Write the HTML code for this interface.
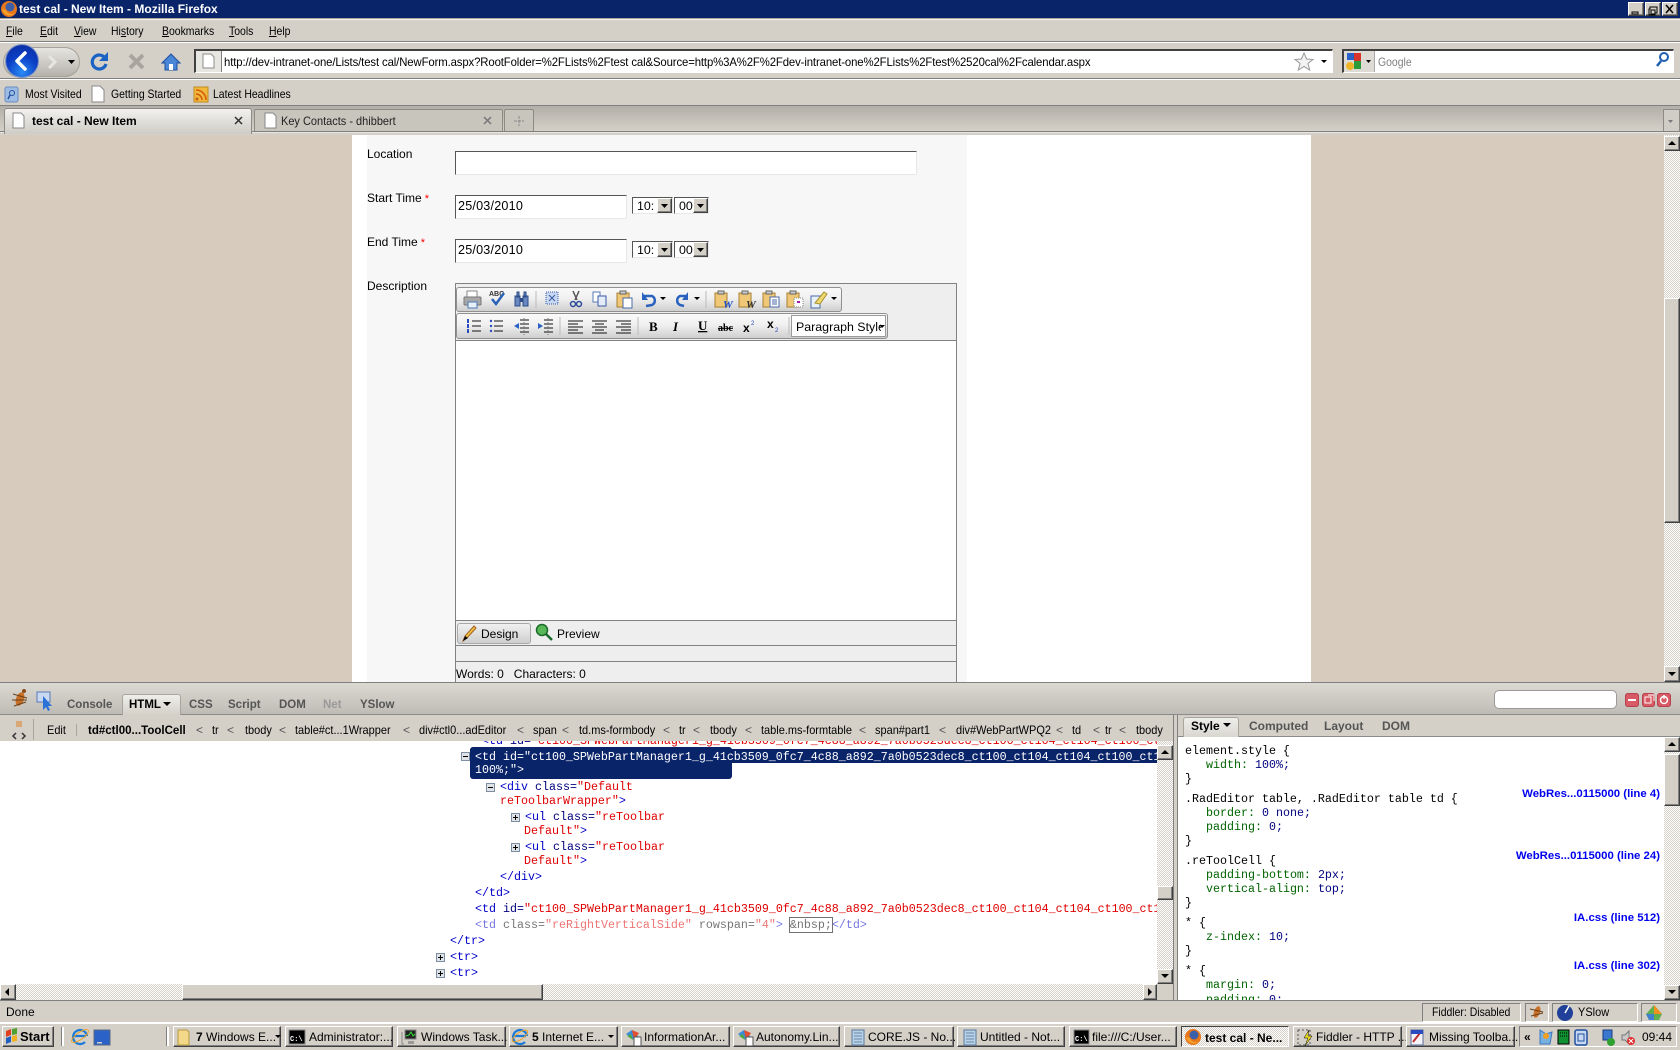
<!DOCTYPE html>
<html><head><meta charset="utf-8"><title>test cal - New Item - Mozilla Firefox</title>
<style>
html,body{margin:0;padding:0;width:1680px;height:1050px;overflow:hidden;background:#d4d0c8}
body{position:relative;font-family:"Liberation Sans",sans-serif;font-size:12px;color:#000}
.a{position:absolute}
.t{position:absolute;white-space:pre;line-height:14px;height:14px}
.u{transform:scaleX(.87);transform-origin:0 50%}
.c{transform:scaleX(.915);transform-origin:0 50%}
.m{position:absolute;white-space:pre;line-height:14px;height:14px;font-family:"Liberation Mono",monospace;font-size:11.67px;color:#000}
.b{color:#0000c8}.n{color:#00007f}.r{color:#e00000}.g{color:#006400}
.raised{position:absolute;box-sizing:border-box;background:#d4d0c8;border:1px solid;border-color:#fff #404040 #404040 #fff;box-shadow:inset -1px -1px #808080}
.chk{position:absolute;background:repeating-conic-gradient(#d4d0c8 0 25%,#fff 0 50%) 0 0/2px 2px}
.in{position:absolute;box-sizing:border-box;background:#fff;border:1px solid;border-top-color:#555;border-left-color:#555;border-right-color:#e8e8e8;border-bottom-color:#e8e8e8}
.tb{position:absolute;top:1026px;height:21px;box-sizing:border-box;background:#d4d0c8;border:1px solid;border-color:#fff #404040 #404040 #fff;box-shadow:inset -1px -1px #808080}
.cell{position:absolute;top:1003px;height:19px;box-sizing:border-box;border:1px solid;border-color:#808080 #fff #fff #808080}
.lk{position:absolute;white-space:pre;line-height:14px;height:14px;font-weight:bold;color:#0000f0;font-size:11.4px;text-align:right;right:20px}
.tree{position:absolute;width:9px;height:9px;box-sizing:border-box;border:1px solid #7d8ea3;background:#dfe3e8}
</style></head><body>

<!-- title bar -->
<div class="a" style="left:0;top:0;width:1680px;height:18px;background:#0a246a"></div>
<div class="t" style="left:19px;top:2px;color:#fff;font-weight:bold;font-size:12px">test cal - New Item - Mozilla Firefox</div>
<div class="raised" style="left:1628px;top:2px;width:16px;height:14px"></div>
<div class="raised" style="left:1645px;top:2px;width:16px;height:14px"></div>
<div class="raised" style="left:1662px;top:2px;width:16px;height:14px"></div>
<div class="a" style="left:0;top:18px;width:1680px;height:1px;background:#a8a59e"></div>
<div class="a" style="left:0;top:19px;width:1680px;height:1px;background:#f4f3f0"></div>

<!-- menu -->
<div class="t u" style="left:6px;top:24px"><u>F</u>ile</div>
<div class="t u" style="left:40px;top:24px"><u>E</u>dit</div>
<div class="t u" style="left:74px;top:24px"><u>V</u>iew</div>
<div class="t u" style="left:111px;top:24px">Hi<u>s</u>tory</div>
<div class="t u" style="left:162px;top:24px"><u>B</u>ookmarks</div>
<div class="t u" style="left:229px;top:24px"><u>T</u>ools</div>
<div class="t u" style="left:269px;top:24px"><u>H</u>elp</div>
<div class="a" style="left:0;top:41px;width:1680px;height:1px;background:#808080"></div>
<div class="a" style="left:0;top:42px;width:1680px;height:1px;background:#fff"></div>

<!-- nav bar -->
<div class="a" style="left:3px;top:47px;width:77px;height:30px;border-radius:15px;background:linear-gradient(#e8e6e1,#b4b1aa);box-shadow:inset 0 0 0 1px #a5a29b"></div>
<div class="a" style="left:6px;top:45px;width:32px;height:32px;border-radius:50%;background:radial-gradient(circle at 50% 85%,#2b8cf5 0,#0b3fc6 50%,#0c2a9c 100%);box-shadow:0 0 0 1px #7d93c8"></div>
<div class="in" style="left:194px;top:49px;width:1139px;height:24px;border-color:#404040 #fff #fff #404040;border-width:2px 1px 1px 2px"></div>
<div class="a" style="left:196px;top:51px;width:25px;height:21px;background:#e8e6e1;border-right:1px solid #808080"></div>
<div class="t" id="url" style="left:224px;top:55px;font-size:12px;letter-spacing:-.12px;transform:scaleX(.945);transform-origin:0 50%">http://dev-intranet-one/Lists/test cal/NewForm.aspx?RootFolder=%2FLists%2Ftest cal&amp;Source=http%3A%2F%2Fdev-intranet-one%2FLists%2Ftest%2520cal%2Fcalendar.aspx</div>
<div class="in" style="left:1342px;top:49px;width:332px;height:24px;border-color:#404040 #fff #fff #404040;border-width:2px 1px 1px 2px"></div>
<div class="a" style="left:1344px;top:51px;width:30px;height:21px;background:#dedbd5;border-right:1px solid #aaa"></div>
<div class="t u" style="left:1378px;top:55px;color:#808080">Google</div>
<div class="a" style="left:0;top:78px;width:1680px;height:1px;background:#808080"></div>
<div class="a" style="left:0;top:79px;width:1680px;height:1px;background:#fff"></div>

<!-- bookmarks -->
<div class="t u" style="left:25px;top:87px">Most Visited</div>
<div class="t u" style="left:111px;top:87px">Getting Started</div>
<div class="t u" style="left:213px;top:87px">Latest Headlines</div>
<div class="a" style="left:0;top:105px;width:1680px;height:1px;background:#808080"></div>

<!-- tab strip -->
<div class="a" style="left:0;top:106px;width:1680px;height:25px;background:linear-gradient(#b2afa8,#d4d0c8)"></div>
<div class="a" style="left:0;top:131px;width:1680px;height:1px;background:#808080"></div>
<div class="a" style="left:0;top:132px;width:1680px;height:1px;background:#e8e6e1"></div>
<div class="a" style="left:0;top:133px;width:1680px;height:2px;background:#d4d0c8"></div>
<div class="a" style="left:254px;top:109px;width:249px;height:22px;box-sizing:border-box;background:#c8c5bd;border:1px solid #8e8b85;border-bottom:0;border-radius:2px 2px 0 0"></div>
<div class="a" style="left:504px;top:109px;width:30px;height:22px;box-sizing:border-box;background:#c8c5bd;border:1px solid #8e8b85;border-bottom:0;border-radius:2px 2px 0 0"></div>
<div class="a" style="left:1663px;top:109px;width:17px;height:22px;box-sizing:border-box;background:#d0cdc6;border:1px solid #8e8b85;border-bottom:0"></div>
<div class="a" style="left:4px;top:108px;width:248px;height:26px;box-sizing:border-box;background:linear-gradient(#f2f1ef,#cfccc5);border:1px solid #8e8b85;border-bottom:0;border-radius:3px 3px 0 0"></div>
<div class="t" style="left:32px;top:114px;font-weight:bold;font-size:12px">test cal - New Item</div>
<div class="t c" style="left:281px;top:114px;color:#222">Key Contacts - dhibbert</div>

<!-- page content -->
<div class="a" style="left:0;top:135px;width:1664px;height:547px;background:#d6cbbd"></div>
<div class="a" style="left:352px;top:135px;width:959px;height:547px;background:#fff"></div>
<div class="a" style="left:367px;top:135px;width:600px;height:547px;background:#f7f7f7"></div>
<div class="t" style="left:367px;top:147px">Location</div>
<div class="in" style="left:455px;top:151px;width:462px;height:24px"></div>
<div class="t" style="left:367px;top:191px">Start Time<span style="color:#f00;font-size:11px"> *</span></div>
<div class="in" style="left:455px;top:195px;width:172px;height:24px"></div>
<div class="t" style="left:458px;top:199px;font-size:12.6px;letter-spacing:.2px">25/03/2010</div>
<div class="t" style="left:367px;top:235px">End Time<span style="color:#f00;font-size:11px"> *</span></div>
<div class="in" style="left:455px;top:239px;width:172px;height:24px"></div>
<div class="t" style="left:458px;top:243px;font-size:12.6px;letter-spacing:.2px">25/03/2010</div>
<div class="t" style="left:367px;top:279px">Description</div>

<!-- selects -->
<div class="in" style="left:632px;top:197px;width:41px;height:17px"></div><div class="t" style="left:637px;top:199px;font-size:12.4px">10:</div><div class="raised" style="left:657px;top:198px;width:15px;height:15px"></div>
<div class="in" style="left:674px;top:197px;width:35px;height:17px"></div><div class="t" style="left:679px;top:199px;font-size:12.4px">00</div><div class="raised" style="left:693px;top:198px;width:15px;height:15px"></div>
<div class="in" style="left:632px;top:241px;width:41px;height:17px"></div><div class="t" style="left:637px;top:243px;font-size:12.4px">10:</div><div class="raised" style="left:657px;top:242px;width:15px;height:15px"></div>
<div class="in" style="left:674px;top:241px;width:35px;height:17px"></div><div class="t" style="left:679px;top:243px;font-size:12.4px">00</div><div class="raised" style="left:693px;top:242px;width:15px;height:15px"></div>

<!-- editor -->
<div class="a" style="left:455px;top:283px;width:502px;height:399px;box-sizing:border-box;background:#eee;border:1px solid #828282;border-bottom:0"></div>
<div class="a" style="left:456px;top:287px;width:386px;height:25px;box-sizing:border-box;border:1px solid #909090;border-radius:3px;background:linear-gradient(#fafafa,#f0f0f0 45%,#cfcfcf)"></div>
<div class="a" style="left:456px;top:313px;width:432px;height:26px;box-sizing:border-box;border:1px solid #909090;border-radius:3px;background:linear-gradient(#fafafa,#f0f0f0 45%,#cfcfcf)"></div>
<div class="a" style="left:791px;top:315px;width:95px;height:22px;box-sizing:border-box;background:#fff;border:1px solid #9a9a9a"></div>
<div class="t" style="left:796px;top:320px;font-size:12.4px">Paragraph Styl<span style="display:inline-block;width:3px;overflow:hidden;vertical-align:top">e</span></div>
<div class="a" style="left:456px;top:340px;width:500px;height:280px;background:#fff;border-top:1px solid #828282;box-sizing:border-box"></div>
<div class="a" style="left:456px;top:620px;width:500px;height:1px;background:#828282"></div>
<div class="a" style="left:456px;top:645px;width:500px;height:1px;background:#828282"></div>
<div class="a" style="left:456px;top:661px;width:500px;height:1px;background:#828282"></div>
<div class="a" style="left:457px;top:623px;width:74px;height:21px;box-sizing:border-box;border:1px solid #a8a8a8;border-radius:3px;background:linear-gradient(#f0f0f0,#cfcfcf)"></div>
<div class="t" style="left:481px;top:627px">Design</div>
<div class="t" style="left:557px;top:627px">Preview</div>
<div class="t" style="left:456px;top:667px">Words: 0&#160;&#160; Characters: 0</div>

<!-- page scrollbar -->
<div class="chk" style="left:1664px;top:135px;width:16px;height:547px"></div>
<div class="raised" style="left:1664px;top:136px;width:16px;height:15px"></div>
<div class="raised" style="left:1664px;top:298px;width:16px;height:225px"></div>
<div class="raised" style="left:1664px;top:666px;width:16px;height:16px"></div>

<!-- firebug panel -->
<div class="a" style="left:0;top:682px;width:1680px;height:1px;background:#808080"></div>
<div class="a" style="left:0;top:683px;width:1680px;height:31px;background:linear-gradient(#dcd9d3,#bfbcb5)"></div>
<div class="a" style="left:0;top:714px;width:1680px;height:1px;background:#8a8a8a"></div>
<div class="a" style="left:122px;top:694px;width:59px;height:21px;box-sizing:border-box;background:linear-gradient(#eeeeea,#d4d0c8);border:1px solid #a8a59e;border-bottom:0;border-radius:3px 3px 0 0"></div>
<div class="t" style="left:67px;top:698px;font-weight:bold;font-size:11.5px;color:#555">Console</div>
<div class="t" style="left:129px;top:698px;font-weight:bold;font-size:11.5px">HTML</div>
<div class="t" style="left:189px;top:698px;font-weight:bold;font-size:11.5px;color:#555">CSS</div>
<div class="t" style="left:228px;top:698px;font-weight:bold;font-size:11.5px;color:#555">Script</div>
<div class="t" style="left:279px;top:698px;font-weight:bold;font-size:11.5px;color:#555">DOM</div>
<div class="t" style="left:323px;top:698px;font-weight:bold;font-size:11.5px;color:#999">Net</div>
<div class="t" style="left:360px;top:698px;font-weight:bold;font-size:11.5px;color:#555">YSlow</div>
<div class="a" style="left:1494px;top:690px;width:123px;height:19px;box-sizing:border-box;background:#fff;border:1px solid #9a9a9a;border-radius:5px"></div>
<div class="a" style="left:1625px;top:693px;width:14px;height:14px;border-radius:3px;background:#d85a64;box-shadow:inset 0 0 0 1px #b5424c"></div>
<div class="a" style="left:1642px;top:693px;width:13px;height:14px;border-radius:3px;background:#d85a64;box-shadow:inset 0 0 0 1px #b5424c"></div>
<div class="a" style="left:1657px;top:693px;width:14px;height:14px;border-radius:3px;background:#d85a64;box-shadow:inset 0 0 0 1px #b5424c"></div>

<!-- breadcrumb -->
<div class="a" style="left:0;top:715px;width:1172px;height:26px;background:#d4d0c8"></div>
<div class="a" style="left:33px;top:719px;width:1px;height:21px;background:#a8a59e"></div>
<div class="a" style="left:76px;top:724px;width:1px;height:12px;background:#a8a59e"></div>
<div class="t c" style="left:47px;top:723px">Edit</div>
<div class="t" style="left:88px;top:723px;font-weight:bold;transform:scaleX(.96);transform-origin:0 50%">td#ctl00...ToolCell</div>
<div class="t" style="left:196px;top:723px;color:#555">&lt;</div><div class="t c" style="left:212px;top:723px">tr</div>
<div class="t" style="left:227px;top:723px;color:#555">&lt;</div><div class="t c" style="left:245px;top:723px">tbody</div>
<div class="t" style="left:279px;top:723px;color:#555">&lt;</div><div class="t c" style="left:295px;top:723px">table#ct...1Wrapper</div>
<div class="t" style="left:403px;top:723px;color:#555">&lt;</div><div class="t c" style="left:419px;top:723px">div#ctl0...adEditor</div>
<div class="t" style="left:517px;top:723px;color:#555">&lt;</div><div class="t c" style="left:533px;top:723px">span</div>
<div class="t" style="left:562px;top:723px;color:#555">&lt;</div><div class="t c" style="left:579px;top:723px">td.ms-formbody</div>
<div class="t" style="left:663px;top:723px;color:#555">&lt;</div><div class="t c" style="left:679px;top:723px">tr</div>
<div class="t" style="left:693px;top:723px;color:#555">&lt;</div><div class="t c" style="left:710px;top:723px">tbody</div>
<div class="t" style="left:745px;top:723px;color:#555">&lt;</div><div class="t c" style="left:761px;top:723px">table.ms-formtable</div>
<div class="t" style="left:859px;top:723px;color:#555">&lt;</div><div class="t c" style="left:875px;top:723px">span#part1</div>
<div class="t" style="left:939px;top:723px;color:#555">&lt;</div><div class="t c" style="left:956px;top:723px">div#WebPartWPQ2</div>
<div class="t" style="left:1056px;top:723px;color:#555">&lt;</div><div class="t c" style="left:1072px;top:723px">td</div>
<div class="t" style="left:1093px;top:723px;color:#555">&lt;</div><div class="t c" style="left:1105px;top:723px">tr</div>
<div class="t" style="left:1119px;top:723px;color:#555">&lt;</div><div class="t c" style="left:1136px;top:723px">tbody</div>

<!-- html panel -->
<div class="a" style="left:0;top:741px;width:1157px;height:243px;background:#fff;overflow:hidden">
 <div class="m" style="left:482px;top:-7px"><span class="b">&lt;td</span> <span class="n">id=</span><span class="r">"ct100_SPWebPartManager1_g_41cb3509_0fc7_4c88_a892_7a0b0523dec8_ct100_ct104_ct104_ct100_ct104_ct</span></div>
</div>
<div class="a" style="left:470px;top:749px;width:687px;height:14px;background:#0a246a"></div>
<div class="a" style="left:470px;top:747px;width:262px;height:32px;background:#0a246a;border-radius:3px"></div>
<div class="tree" style="left:461px;top:752px"></div>
<div class="m" style="left:475px;top:750px;width:682px;overflow:hidden;color:#fff">&lt;td id="ct100_SPWebPartManager1_g_41cb3509_0fc7_4c88_a892_7a0b0523dec8_ct100_ct104_ct104_ct100_ct104</div>
<div class="m" style="left:475px;top:763px;color:#fff">100%;"&gt;</div>
<div class="tree" style="left:486px;top:783px"></div>
<div class="m" style="left:500px;top:780px"><span class="b">&lt;div</span> <span class="n">class=</span><span class="r">"Default</span></div>
<div class="m" style="left:500px;top:794px"><span class="r">reToolbarWrapper"</span><span class="b">&gt;</span></div>
<div class="tree" style="left:511px;top:813px"></div>
<div class="m" style="left:525px;top:810px"><span class="b">&lt;ul</span> <span class="n">class=</span><span class="r">"reToolbar</span></div>
<div class="m" style="left:524px;top:824px"><span class="r">Default"</span><span class="b">&gt;</span></div>
<div class="tree" style="left:511px;top:843px"></div>
<div class="m" style="left:525px;top:840px"><span class="b">&lt;ul</span> <span class="n">class=</span><span class="r">"reToolbar</span></div>
<div class="m" style="left:524px;top:854px"><span class="r">Default"</span><span class="b">&gt;</span></div>
<div class="m" style="left:500px;top:870px"><span class="b">&lt;/div&gt;</span></div>
<div class="m" style="left:475px;top:886px"><span class="b">&lt;/td&gt;</span></div>
<div class="m" style="left:475px;top:902px;width:682px;overflow:hidden"><span class="b">&lt;td</span> <span class="n">id=</span><span class="r">"ct100_SPWebPartManager1_g_41cb3509_0fc7_4c88_a892_7a0b0523dec8_ct100_ct104_ct104_ct100_ct104</span></div>
<div class="m" style="left:475px;top:918px;opacity:.55"><span class="b">&lt;td</span> <span class="n" style="color:#000">class=</span><span class="r">"reRightVerticalSide"</span> <span style="color:#000">rowspan=</span><span class="r">"4"</span><span class="b">&gt;</span> <span style="outline:1px solid #000;color:#000">&amp;nbsp;</span><span class="b">&lt;/td&gt;</span></div>
<div class="m" style="left:450px;top:934px"><span class="b">&lt;/tr&gt;</span></div>
<div class="tree" style="left:436px;top:953px"></div>
<div class="m" style="left:450px;top:950px"><span class="b">&lt;tr&gt;</span></div>
<div class="tree" style="left:436px;top:969px"></div>
<div class="m" style="left:450px;top:966px"><span class="b">&lt;tr&gt;</span></div>

<!-- html scrollbars -->
<div class="chk" style="left:1157px;top:741px;width:16px;height:243px"></div>
<div class="raised" style="left:1157px;top:745px;width:16px;height:15px"></div>
<div class="raised" style="left:1157px;top:886px;width:16px;height:14px"></div>
<div class="raised" style="left:1157px;top:969px;width:16px;height:15px"></div>
<div class="chk" style="left:0;top:984px;width:1157px;height:16px"></div>
<div class="raised" style="left:0;top:984px;width:16px;height:16px"></div>
<div class="raised" style="left:182px;top:984px;width:361px;height:16px"></div>
<div class="raised" style="left:1143px;top:984px;width:14px;height:16px"></div>

<!-- side panel -->
<div class="a" style="left:1173px;top:715px;width:1px;height:285px;background:#808080"></div>
<div class="a" style="left:1177px;top:715px;width:1px;height:285px;background:#808080"></div>
<div class="a" style="left:1178px;top:715px;width:502px;height:21px;background:#d4d0c8"></div>
<div class="a" style="left:1178px;top:736px;width:502px;height:1px;background:#8a8a8a"></div>
<div class="a" style="left:1183px;top:717px;width:56px;height:20px;box-sizing:border-box;background:linear-gradient(#eeeeea,#d9d6d0);border:1px solid #a8a59e;border-bottom:0;border-radius:3px 3px 0 0"></div>
<div class="t" style="left:1191px;top:719px;font-weight:bold;font-size:12px">Style</div>
<div class="t" style="left:1249px;top:719px;font-weight:bold;font-size:12px;color:#555">Computed</div>
<div class="t" style="left:1324px;top:719px;font-weight:bold;font-size:12px;color:#555">Layout</div>
<div class="t" style="left:1382px;top:719px;font-weight:bold;font-size:12px;color:#555">DOM</div>
<div class="a" style="left:1178px;top:737px;width:486px;height:263px;background:#fff;overflow:hidden">
 <div class="m" style="left:7px;top:7px">element.style {</div>
 <div class="m" style="left:28px;top:21px"><span class="g">width:</span> <span class="n">100%;</span></div>
 <div class="m" style="left:7px;top:35px">}</div>
 <div class="m" style="left:7px;top:55px">.RadEditor table, .RadEditor table td {</div>
 <div class="m" style="left:28px;top:69px"><span class="g">border:</span> <span class="n">0 none;</span></div>
 <div class="m" style="left:28px;top:83px"><span class="g">padding:</span> <span class="n">0;</span></div>
 <div class="m" style="left:7px;top:97px">}</div>
 <div class="m" style="left:7px;top:117px">.reToolCell {</div>
 <div class="m" style="left:28px;top:131px"><span class="g">padding-bottom:</span> <span class="n">2px;</span></div>
 <div class="m" style="left:28px;top:145px"><span class="g">vertical-align:</span> <span class="n">top;</span></div>
 <div class="m" style="left:7px;top:159px">}</div>
 <div class="m" style="left:7px;top:179px">* {</div>
 <div class="m" style="left:28px;top:193px"><span class="g">z-index:</span> <span class="n">10;</span></div>
 <div class="m" style="left:7px;top:207px">}</div>
 <div class="m" style="left:7px;top:227px">* {</div>
 <div class="m" style="left:28px;top:241px"><span class="g">margin:</span> <span class="n">0;</span></div>
 <div class="m" style="left:28px;top:256px"><span class="g">padding:</span> <span class="n">0;</span></div>
</div>
<div class="lk" style="top:787px">WebRes...0115000 (line 4)</div>
<div class="lk" style="top:849px">WebRes...0115000 (line 24)</div>
<div class="lk" style="top:911px">IA.css (line 512)</div>
<div class="lk" style="top:959px">IA.css (line 302)</div>
<div class="chk" style="left:1664px;top:737px;width:16px;height:263px"></div>
<div class="raised" style="left:1664px;top:737px;width:16px;height:15px"></div>
<div class="raised" style="left:1664px;top:754px;width:16px;height:52px"></div>
<div class="raised" style="left:1664px;top:985px;width:16px;height:15px"></div>

<!-- status bar -->
<div class="a" style="left:0;top:1000px;width:1680px;height:3px;background:#d4d0c8;border-top:1px solid #808080;box-sizing:border-box"></div>
<div class="a" style="left:0;top:1003px;width:1680px;height:19px;background:#d4d0c8"></div>
<div class="t" style="left:6px;top:1005px">Done</div>
<div class="cell" style="left:1422px;width:99px"></div><div class="t u" style="left:1432px;top:1005px">Fiddler: Disabled</div>
<div class="cell" style="left:1525px;width:24px"></div>
<div class="cell" style="left:1552px;width:86px"></div><div class="t c" style="left:1578px;top:1005px">YSlow</div>
<div class="cell" style="left:1641px;width:36px"></div>
<div class="a" style="left:0;top:1022px;width:1680px;height:2px;background:#fff"></div>

<!-- taskbar -->
<div class="tb" style="left:2px;width:52px"></div>
<div class="t" style="left:20px;top:1030px;font-weight:bold;font-size:13px">Start</div>
<div class="a" style="left:62px;top:1027px;width:2px;height:19px;background:#fff;box-shadow:-1px 0 #808080"></div>
<div class="a" style="left:167px;top:1027px;width:2px;height:19px;background:#fff;box-shadow:-1px 0 #808080"></div>
<div class="tb" style="left:173px;width:108px"></div><div class="t" style="left:196px;top:1030px"><b>7</b> Windows E...</div>
<div class="tb" style="left:285px;width:108px"></div><div class="t" style="left:309px;top:1030px">Administrator:...</div>
<div class="tb" style="left:397px;width:109px"></div><div class="t" style="left:421px;top:1030px">Windows Task...</div>
<div class="tb" style="left:509px;width:109px"></div><div class="t" style="left:532px;top:1030px"><b>5</b> Internet E...</div>
<div class="tb" style="left:621px;width:109px"></div><div class="t" style="left:644px;top:1030px">InformationAr...</div>
<div class="tb" style="left:733px;width:107px"></div><div class="t" style="left:756px;top:1030px">Autonomy.Lin...</div>
<div class="tb" style="left:844px;width:110px"></div><div class="t" style="left:868px;top:1030px">CORE.JS - No...</div>
<div class="tb" style="left:957px;width:108px"></div><div class="t" style="left:980px;top:1030px">Untitled - Not...</div>
<div class="tb" style="left:1069px;width:108px"></div><div class="t" style="left:1092px;top:1030px">file:///C:/User...</div>
<div class="a" style="left:1181px;top:1026px;width:108px;height:21px;box-sizing:border-box;border:1px solid;border-color:#404040 #fff #fff #404040;background:repeating-conic-gradient(#d4d0c8 0 25%,#fff 0 50%) 0 0/2px 2px"></div><div class="t" style="left:1205px;top:1031px;font-weight:bold">test cal - Ne...</div>
<div class="tb" style="left:1293px;width:109px"></div><div class="t" style="left:1316px;top:1030px">Fiddler - HTTP ...</div>
<div class="tb" style="left:1406px;width:109px"></div><div class="t" style="left:1429px;top:1030px">Missing Toolba...</div>
<div class="a" style="left:1519px;top:1026px;width:158px;height:21px;box-sizing:border-box;border:1px solid;border-color:#808080 #fff #fff #808080"></div>
<div class="t" style="left:1524px;top:1030px;font-weight:bold">«</div>
<div class="t" style="left:1642px;top:1030px">09:44</div>

<!-- icon overlay -->
<svg class="a" style="left:0;top:0" width="1680" height="1050" viewBox="0 0 1680 1050" xmlns="http://www.w3.org/2000/svg">
 <!-- firefox logo -->
 <circle cx="9" cy="9" r="8" fill="#e8761a"/><circle cx="10" cy="7" r="4.5" fill="#3b5fa8"/><path d="M2 9c1 6 9 9 13 4-3 2-8 1-9-3z" fill="#f2a02c"/>
 <!-- window buttons -->
 <path d="M1632 12h6v2h-6zM1650 7h7v6h-2v2h-6v-6h1zM1651 10h4v4h-4z" stroke="#000" stroke-width="1" fill="none"/><path d="M1666 5l7 8M1673 5l-7 8" stroke="#000" stroke-width="1.500" fill="none"/>
 <!-- back / forward -->
 <path d="M25 53l-8 8 8 8" stroke="#fff" stroke-width="3.5" fill="none" stroke-linecap="round" stroke-linejoin="round"/>
 <path d="M49 56l6 6-6 6" stroke="#e8e6e1" stroke-width="3" fill="none"/>
 <path d="M68 60h7l-3.5 4z" fill="#000"/>
 <!-- reload -->
 <path d="M105 58a7 7 0 1 0 1 6" stroke="#1a62c4" stroke-width="3.2" fill="none"/><path d="M108 52v9h-9z" fill="#1a62c4"/>
 <!-- stop -->
 <path d="M130 55l13 13M143 55l-13 13" stroke="#a8a59e" stroke-width="4"/>
 <!-- home -->
 <path d="M162 63l9-9 9 9h-3v7h-12v-7z" fill="#4a86d8" stroke="#1f4f9e"/><rect x="169" y="64" width="4" height="6" fill="#fff"/>
 <!-- url favicon -->
 <path d="M203 54h8l3 3v11h-11z" fill="#fff" stroke="#8c8c8c"/>
 <!-- star -->
 <path d="M1304 53l2.6 6 6.4.5-5 4 1.7 6.5-5.7-3.5-5.700 3.5 1.7-6.5-5-4 6.400-.5z" fill="#f2f2f2" stroke="#999"/>
 <path d="M1321 60h6l-3 3z" fill="#000"/><path d="M1366 60h5l-2.500 3z" fill="#000"/>
 <!-- google -->
 <rect x="1347" y="53" width="7" height="7" fill="#2a62c8"/><rect x="1354" y="53" width="7" height="8" fill="#d8342c"/><rect x="1354" y="61" width="7" height="8" fill="#2e9a3a"/><circle cx="1350" cy="66" r="4" fill="#f0b428"/>
 <!-- search -->
 <circle cx="1664" cy="57" r="4" fill="none" stroke="#1f5fb0" stroke-width="2"/><path d="M1661 61l-4 5" stroke="#1f5fb0" stroke-width="2.500"/>
 <!-- bookmarks icons -->
 <rect x="5" y="87" width="13" height="15" rx="2" fill="#9cbce4" stroke="#6a8cc0"/><circle cx="12" cy="93" r="2.500" fill="none" stroke="#2050a0"/><path d="M10 95l-2 4" stroke="#2050a0" stroke-width="1.500"/>
 <path d="M92 86h8l4 4v12h-12z" fill="#fff" stroke="#888"/>
 <rect x="194" y="87" width="14" height="15" fill="#f2b83a" stroke="#c08a20"/><circle cx="197" cy="99" r="1.500" fill="#d05a10"/><path d="M196 94a6 6 0 0 1 6 6M196 90a10 10 0 0 1 10 10" stroke="#d05a10" fill="none" stroke-width="1.500"/>
 <!-- tab icons -->
 <path d="M13 113h8l3 3v12h-11z" fill="#fff" stroke="#888"/>
 <path d="M265 113h8l3 3v12h-11z" fill="#fff" stroke="#888"/>
 <path d="M235 117l7 7M242 117l-7 7" stroke="#333" stroke-width="1.500"/>
 <path d="M484 117l7 7M491 117l-7 7" stroke="#777" stroke-width="1.500"/>
 <path d="M519 116v10M514 121h10" stroke="#888" stroke-dasharray="3 1"/>
 <path d="M1668 120h5l-2.500 3z" fill="#777"/>
 <!-- scroll arrows -->
 <path d="M1672 141l4 4h-8z" fill="#000"/><path d="M1668 672h8l-4 4z" fill="#000"/>
 <path d="M1165 750l4 4h-8z" fill="#000"/><path d="M1161 974h8l-4 4z" fill="#000"/>
 <path d="M5 992l4-4v8z" fill="#000"/><path d="M1148 988v8l4-4z" fill="#000"/>
 <path d="M1672 742l4 4h-8z" fill="#000"/><path d="M1668 990h8l-4 4z" fill="#000"/>
 <!-- select arrows -->
 <path d="M661 204h7l-3.500 4z" fill="#000"/><path d="M697 204h7l-3.500 4z" fill="#000"/>
 <path d="M661 248h7l-3.500 4z" fill="#000"/><path d="M697 248h7l-3.500 4z" fill="#000"/>

 <!-- editor row 1 -->
 <rect x="467" y="291" width="10" height="6" fill="#fff" stroke="#888"/><rect x="464" y="297" width="17" height="8" rx="1" fill="#a8a8a8" stroke="#777"/><rect x="468" y="302" width="9" height="6" fill="#e8f0fa" stroke="#4a7ab8"/>
 <text x="489" y="296" font-size="7" font-weight="bold" font-family="Liberation Sans" fill="#333">ABC</text><path d="M492 299l4 5 8-11" stroke="#2a62b8" stroke-width="2.500" fill="none"/>
 <path d="M515 296h5v10h-5zM523 296h5v10h-5zM517 292h2v5h-2zM524 292h2v5h-2z" fill="#6a88c0" stroke="#2a4a88"/><rect x="520" y="298" width="3" height="4" fill="#2a4a88"/>
 <line x1="536" y1="291" x2="536" y2="308" stroke="#bbb"/>
 <rect x="546" y="292" width="12" height="12" fill="#c8d8f0" stroke="#3a5aa8" stroke-dasharray="1 1"/><path d="M549 295l6 6M555 295l-6 6" stroke="#3a5aa8"/>
 <path d="M573 291l4 9M579 291l-4 9" stroke="#555" stroke-width="1.500"/><circle cx="573" cy="304" r="2.500" fill="none" stroke="#2a4a98" stroke-width="1.500"/><circle cx="579" cy="304" r="2.500" fill="none" stroke="#2a4a98" stroke-width="1.500"/>
 <path d="M593 292h7v10h-7z" fill="#fff" stroke="#5a7ab8"/><path d="M598 296h8v10h-8z" fill="#e4ecf8" stroke="#3a5aa8"/>
 <rect x="617" y="293" width="12" height="14" fill="#efc878" stroke="#a88030"/><rect x="620" y="291" width="6" height="3" fill="#ccc" stroke="#666"/><path d="M623 298h9v10h-9z" fill="#fff" stroke="#4a6aa8"/>
 <path d="M644 296l8 0a5 5 0 0 1 0 9l-6 1" stroke="#2a62c0" stroke-width="2.500" fill="none"/><path d="M642 292v8h6z" fill="#2a62c0"/>
 <path d="M660 297h6l-3 3z" fill="#000"/>
 <path d="M686 296l-6 0a5 5 0 0 0 0 9l4 1" stroke="#2a62c0" stroke-width="2.500" fill="none"/><path d="M688 292v8h-6z" fill="#2a62c0"/>
 <path d="M694 297h6l-3 3z" fill="#000"/>
 <line x1="706" y1="291" x2="706" y2="308" stroke="#bbb"/>
 <g fill="#efc878" stroke="#a88030"><rect x="715" y="293" width="12" height="14"/><rect x="739" y="293" width="12" height="14"/><rect x="763" y="293" width="12" height="14"/><rect x="787" y="293" width="12" height="14"/></g>
 <g fill="#ccc" stroke="#666"><rect x="718" y="291" width="6" height="3"/><rect x="742" y="291" width="6" height="3"/><rect x="766" y="291" width="6" height="3"/><rect x="790" y="291" width="6" height="3"/></g>
 <text x="723" y="308" font-size="11" font-weight="bold" font-style="italic" font-family="Liberation Serif" fill="#1a50c8">W</text>
 <text x="746" y="308" font-size="11" font-weight="bold" font-style="italic" font-family="Liberation Serif" fill="#333">W</text>
 <rect x="770" y="297" width="9" height="10" fill="#fff" stroke="#4a6aa8"/><path d="M772 300h5M772 302h5M772 304h5" stroke="#4a6aa8"/>
 <rect x="794" y="298" width="9" height="9" fill="#fff" stroke="#888" stroke-dasharray="1 1"/><path d="M797 302h3" stroke="#a020a0" stroke-width="2"/>
 <path d="M811 296h9v12h-9z" fill="#e8f0f8" stroke="#4a6aa8"/><path d="M815 303l9-11 3 2-7 10z" fill="#f0d870" stroke="#a89030"/>
 <path d="M831 297h6l-3 3z" fill="#000"/>
 <!-- editor row 2 -->
 <g stroke="#111"><path d="M472 321h9M472 326h9M472 331h9M494 321h9M494 326h9M494 331h9"/></g>
 <g fill="#2a4ac0"><rect x="467" y="319" width="2" height="4"/><rect x="467" y="324" width="2" height="4"/><rect x="467" y="329" width="2" height="4"/><circle cx="491" cy="321" r="1.200"/><circle cx="491" cy="326" r="1.200"/><circle cx="491" cy="331" r="1.200"/></g>
 <g stroke="#111"><path d="M520 320h9M520 324h9M520 328h9M520 332h9M544 320h9M544 324h9M544 328h9M544 332h9"/></g>
 <path d="M514 326l5-3v6zM543 326l-5-3v6z" fill="#2a62c8"/><path d="M524 318v18M548 318v18" stroke="#777" stroke-dasharray="1 1"/>
 <line x1="560" y1="317" x2="560" y2="335" stroke="#bbb"/>
 <g stroke="#111"><path d="M568 321h15M568 324h10M568 327h15M568 330h10M568 333h15"/><path d="M592 321h15M595 324h9M592 327h15M595 330h9M592 333h15"/><path d="M616 321h15M621 324h10M616 327h15M621 330h10M616 333h15"/></g>
 <line x1="638" y1="317" x2="638" y2="335" stroke="#bbb"/>
 <text x="649" y="331" font-size="13" font-weight="bold" font-family="Liberation Serif">B</text>
 <text x="673" y="331" font-size="13" font-style="italic" font-weight="bold" font-family="Liberation Serif">I</text>
 <text x="698" y="330" font-size="13" font-weight="bold" font-family="Liberation Serif" text-decoration="underline">U</text>
 <text x="718" y="331" font-size="10" font-weight="bold" font-family="Liberation Serif" text-decoration="line-through">abc</text>
 <text x="743" y="332" font-size="12" font-weight="bold" font-family="Liberation Sans">x</text><text x="751" y="325" font-size="6" font-family="Liberation Sans" fill="#2a4ac0">2</text>
 <text x="767" y="328" font-size="12" font-weight="bold" font-family="Liberation Sans">x</text><text x="775" y="332" font-size="6" font-family="Liberation Sans" fill="#2a4ac0">2</text>
 <line x1="789" y1="317" x2="789" y2="335" stroke="#bbb"/>
 <path d="M879 325h6l-3 3z" fill="#000"/>
 <!-- design / preview -->
 <path d="M463 641l2-5 9-10 2 2-9 10z" fill="#f0c040" stroke="#a06020"/><path d="M463 641l2-5 3 2z" fill="#000"/>
 <circle cx="542" cy="630" r="5.500" fill="#58b858" stroke="#1a6a2a" stroke-width="1.500"/><path d="M546 634l6 6" stroke="#1a6a2a" stroke-width="2.500"/>
 <!-- firebug bug -->
 <ellipse cx="20" cy="699" rx="4" ry="7" fill="#c87028" transform="rotate(20 20 699)"/><circle cx="24" cy="691" r="2" fill="#8a4a18"/><path d="M13 694l14 4M12 700l15 0M14 706l12-4" stroke="#6a4018"/>
 <!-- inspect -->
 <rect x="37" y="692" width="13" height="10" fill="#c8d8f0" stroke="#5878b8"/><path d="M43 696v14l3-3 2 4 2-1-2-4h4z" fill="#2a72d8"/>
 <path d="M163 702h8l-4 4z" fill="#000"/>
 <path d="M1223 723h8l-4 4z" fill="#000"/>
 <!-- firebug window buttons -->
 <path d="M1628 700h8" stroke="#fff" stroke-width="2"/><path d="M1645 697h6v6h-6zM1648 695h6v6" stroke="#fff" fill="none"/><circle cx="1664" cy="700" r="3.500" fill="none" stroke="#fff" stroke-width="1.500"/><path d="M1664 695v4" stroke="#fff" stroke-width="1.500"/>
 <!-- breadcrumb edit icon -->
 <path d="M17 721v6M19 721v6M21 721v6" stroke="#e08020"/><path d="M16 733l-3 3 3 3M22 733l3 3-3 3" stroke="#333" fill="none" stroke-width="1.500"/>
 <!-- tree +/- -->
 <g stroke="#000"><path d="M463 756.500h5M488 787.500h5M513 817.500h5M513 847.500h5M438 957.500h5M438 973.500h5"/><path d="M515.500 815v5M515.500 845v5M440.500 955v5M440.500 971v5"/></g>
 <!-- statusbar icons -->
 <ellipse cx="1537" cy="1012" rx="3" ry="6" fill="#c87028" transform="rotate(20 1537 1012)"/><path d="M1530 1009l13 3M1531 1016l12-3" stroke="#6a4018"/>
 <circle cx="1565" cy="1013" r="8" fill="#20409a"/><path d="M1565 1013l4-7" stroke="#fff" stroke-width="1.500"/>
 <path d="M1646 1014l8-9 8 9-3 6h-10z" fill="#60b050"/><path d="M1654 1005l8 9-8 0z" fill="#f09020"/><path d="M1646 1014h8v6h-5z" fill="#4080d0"/>
 <!-- start flag -->
 <path d="M6 1031l5-2v6l-5 2z" fill="#e04020"/><path d="M12 1029l5-1v6l-5 1z" fill="#50a030"/><path d="M6 1038l5-2v6l-5 2z" fill="#2060c0"/><path d="M12 1036l5-1v6l-5 1z" fill="#f0b020"/>
 <!-- quick launch -->
 <g fill="none" stroke="#1a7ad8" stroke-width="2.200"><path d="M87 1036a7 7 0 1 0-2 6M74 1036h12"/></g><ellipse cx="80" cy="1036" rx="10" ry="3.500" fill="none" stroke="#f0a020" transform="rotate(-35 80 1036)"/>
 <rect x="94" y="1030" width="16" height="15" fill="#2a62c8" stroke="#5a6a80"/><rect x="97" y="1042" width="5" height="1.500" fill="#d4d0c8"/>
 <!-- taskbar icons -->
 <path d="M178 1030h9l2 2v13h-11z" fill="#f2d888" stroke="#b89840"/><path d="M275 1035h6l-3 3z" fill="#000"/>
 <rect x="289" y="1030" width="16" height="14" fill="#000" stroke="#888"/><text x="290" y="1041" font-size="7" font-weight="bold" fill="#fff" font-family="Liberation Mono">C:\</text>
 <rect x="405" y="1030" width="11" height="9" fill="#222" stroke="#888"/><path d="M406 1036l3-1 2-3 2 4 2-2" stroke="#30e030" fill="none"/><path d="M402 1032v12h2" stroke="#888" fill="none"/><path d="M408 1041h6v3h-6z" fill="#999"/>
 <g fill="none" stroke="#1a7ad8" stroke-width="2.200"><path d="M527 1036a7 7 0 1 0-2 6M514 1036h12"/></g><ellipse cx="520" cy="1036" rx="9" ry="3.500" fill="none" stroke="#f0a020" transform="rotate(-35 520 1036)"/>
 <path d="M608 1035h6l-3 3z" fill="#000"/>
 <g><path d="M626 1034l6-4 8 8-3 4z" fill="#3a8ad8"/><path d="M632 1030l7 3-5 7z" fill="#e05030"/><path d="M627 1036l4-2 2 6z" fill="#50a840"/><rect x="634" y="1037" width="7" height="9" fill="#fff" stroke="#555"/></g>
 <g><path d="M738 1034l6-4 8 8-3 4z" fill="#3a8ad8"/><path d="M744 1030l7 3-5 7z" fill="#e05030"/><path d="M739 1036l4-2 2 6z" fill="#50a840"/><rect x="746" y="1037" width="7" height="9" fill="#fff" stroke="#555"/></g>
 <rect x="852" y="1030" width="12" height="15" fill="#b8d0e8" stroke="#5a7a9a"/><path d="M854 1033h8M854 1036h8M854 1039h8M854 1042h8" stroke="#6a8aa8"/>
 <rect x="964" y="1030" width="12" height="15" fill="#b8d0e8" stroke="#5a7a9a"/><path d="M966 1033h8M966 1036h8M966 1039h8M966 1042h8" stroke="#6a8aa8"/>
 <rect x="1074" y="1030" width="15" height="14" fill="#000" stroke="#888"/><text x="1075" y="1041" font-size="7" font-weight="bold" fill="#fff" font-family="Liberation Mono">C:\</text>
 <circle cx="1193" cy="1037" r="8" fill="#e8761a"/><circle cx="1194" cy="1035" r="4.500" fill="#3b5fa8"/><path d="M1186 1037c1 6 9 9 13 4-3 2-8 1-9-3z" fill="#f2a02c"/>
 <path d="M1298 1030h12v15h-12z" fill="none" stroke="#555" stroke-dasharray="2 2"/><path d="M1309 1030l-5 8h4l-3 8 7-10h-4z" fill="#f0e020" stroke="#000" stroke-width=".5"/>
 <rect x="1411" y="1030" width="12" height="15" fill="#f4f4f8" stroke="#5a6a9a"/><path d="M1413 1042l7-9" stroke="#c03030" stroke-width="2"/><rect x="1411" y="1030" width="12" height="4" fill="#2a4ac0"/>
 <!-- tray -->
 <path d="M1540 1030l6 4 6-2-2 12-10 0z" fill="#78b0e0" stroke="#3a78c0"/><circle cx="1546" cy="1036" r="3" fill="#f0a020"/>
 <rect x="1558" y="1030" width="11" height="14" fill="#109030" stroke="#000"/><path d="M1560 1033h7M1560 1036h7" stroke="#000" stroke-dasharray="1 1"/>
 <rect x="1575" y="1030" width="12" height="15" rx="2" fill="#c8d8f0" stroke="#2050a0" stroke-width="1.500"/><rect x="1578" y="1034" width="6" height="7" fill="none" stroke="#2050a0"/>
 <rect x="1603" y="1030" width="9" height="10" fill="#3a78d0" stroke="#1a3a80"/><circle cx="1611" cy="1042" r="4" fill="#30a030"/>
 <path d="M1622 1035h3l4-4v13l-4-4h-3z" fill="#c8c8c8" stroke="#777"/><circle cx="1631" cy="1041" r="4" fill="#e03030"/><path d="M1629 1039l4 4M1633 1039l-4 4" stroke="#fff"/>
</svg>
</body></html>
